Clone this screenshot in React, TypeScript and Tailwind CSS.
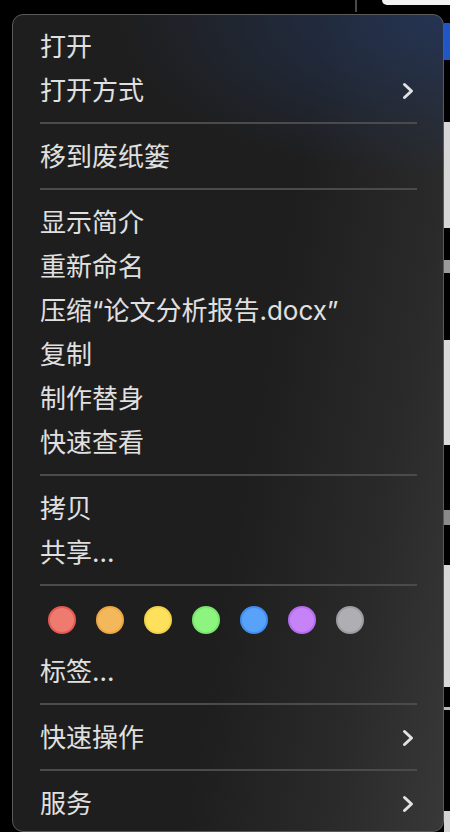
const FONT = "font-['Inter','Noto_Sans_CJK_SC',sans-serif]";

type Row =
  | { kind: "item"; label: string; sub?: boolean }
  | { kind: "sep" }
  | { kind: "tags" };

const rows: Row[] = [
  { kind: "item", label: "打开" },
  { kind: "item", label: "打开方式", sub: true },
  { kind: "sep" },
  { kind: "item", label: "移到废纸篓" },
  { kind: "sep" },
  { kind: "item", label: "显示简介" },
  { kind: "item", label: "重新命名" },
  { kind: "item", label: "压缩“论文分析报告.docx”" },
  { kind: "item", label: "复制" },
  { kind: "item", label: "制作替身" },
  { kind: "item", label: "快速查看" },
  { kind: "sep" },
  { kind: "item", label: "拷贝" },
  { kind: "item", label: "共享..." },
  { kind: "sep" },
  { kind: "tags" },
  { kind: "item", label: "标签..." },
  { kind: "sep" },
  { kind: "item", label: "快速操作", sub: true },
  { kind: "sep" },
  { kind: "item", label: "服务", sub: true },
];

const tagColors = [
  "bg-[#ee7a70] border-[#e35a50]",
  "bg-[#f4b85c] border-[#eea743]",
  "bg-[#fde15c] border-[#f2d34a]",
  "bg-[#8cf47f] border-[#78e76c]",
  "bg-[#58a2fa] border-[#3f8ef0]",
  "bg-[#c682f7] border-[#b56cef]",
  "bg-[#afaeb2] border-[#9d9ca0]",
];

function Chevron() {
  return (
    <svg width="12" height="18" viewBox="0 0 12 18" className="mr-[3px]">
      <polyline
        points="2.5,2.5 9.5,9 2.5,15.5"
        fill="none"
        stroke="#e2e2e2"
        strokeWidth="3"
        strokeLinecap="round"
        strokeLinejoin="round"
      />
    </svg>
  );
}

// stuff of the Finder window peeking out on the right
const strip = [
  { h: 9, c: "bg-black" },
  { h: 37, c: "bg-[#2156c6]" },
  { h: 62, c: "bg-black" },
  { h: 106, c: "bg-[#d6d6d6]" },
  { h: 32, c: "bg-black" },
  { h: 13, c: "bg-[#9a9a9a]" },
  { h: 67, c: "bg-black" },
  { h: 105, c: "bg-[#dadada]" },
  { h: 65, c: "bg-black" },
  { h: 15, c: "bg-[#8a8a8a]" },
  { h: 40, c: "bg-black" },
  { h: 122, c: "bg-[#d8d8d8]" },
  { h: 20, c: "bg-black" },
  { h: 3, c: "bg-[#bbbbbb]" },
  { h: 101, c: "bg-black" },
  { h: 30, c: "bg-[#d4d4d4]" },
];

export default function App() {
  return (
    <div className={`w-[450px] h-[832px] bg-black overflow-hidden flex flex-col ${FONT}`}>
      <div className="h-[14px] flex items-start shrink-0">
        <div className="ml-[355px] w-[2px] h-[12px] bg-[#4a4a4a]" />
        <div className="ml-[25px] w-[68px] h-[5px] bg-[#f2f2f2] rounded-bl-[5px]" />
      </div>
      <div className="flex flex-1 min-h-0">
        <div className="w-[12px] shrink-0" />
        <div className="w-[432px] shrink-0 h-[818px] rounded-[11px] border border-[#5a5a5a] bg-[radial-gradient(ellipse_75%_20%_at_100%_0%,rgba(36,54,90,0.85)_0%,rgba(36,54,90,0)_100%),linear-gradient(100deg,#1e1e1e_55%,#2a2a2a_80%,#383838_100%)] pt-[9px] pb-[5px] pr-[26px] pl-[27px] text-[#e0e0e0] text-[26px]">
          {rows.map((r, i) => {
            if (r.kind === "sep")
              return (
                <div key={i} className="h-[22px] flex items-center">
                  <div className="h-[2px] w-full bg-[#4b4b4b]" />
                </div>
              );
            if (r.kind === "tags")
              return (
                <div key={i} className="h-[53px] pt-[10px] pl-[8px] flex gap-[20px]">
                  {tagColors.map((c) => (
                    <div key={c} className={`w-[28px] h-[28px] rounded-full border-2 ${c}`} />
                  ))}
                </div>
              );
            return (
              <div key={i} className="h-[44px] flex items-center justify-between pt-[1px] leading-none">
                <span>{r.label}</span>
                {r.sub && <Chevron />}
              </div>
            );
          })}
        </div>
        <div className="flex-1 flex flex-col">
          {strip.map((s, i) => (
            <div key={i} className={`shrink-0 ${s.c}`} style={{ height: s.h }} />
          ))}
        </div>
      </div>
    </div>
  );
}
